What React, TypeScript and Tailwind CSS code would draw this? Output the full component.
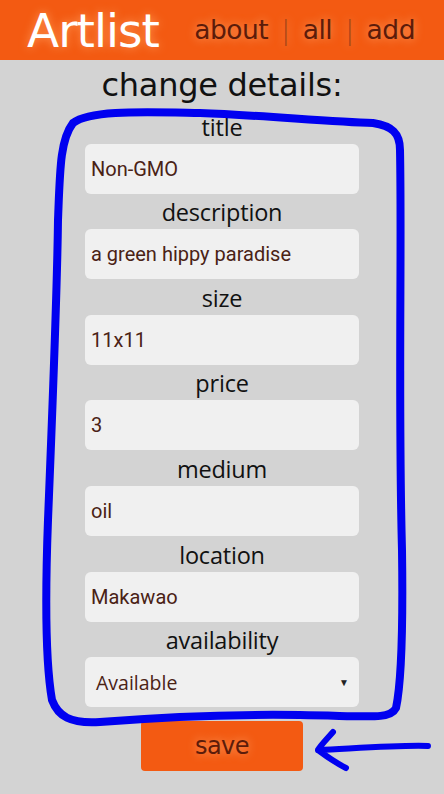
import React from "react";

const fields: { label: string; value: string }[] = [
  { label: "title", value: "Non-GMO" },
  { label: "description", value: "a green hippy paradise" },
  { label: "size", value: "11x11" },
  { label: "price", value: "3" },
  { label: "medium", value: "oil" },
  { label: "location", value: "Makawao" },
];

export default function App() {
  return (
    <div className="relative w-[444px] h-[794px] bg-[#d3d3d3] overflow-hidden">
      <header className="h-[60px] bg-[#f35a12] flex items-center px-[27px]">
        <div className="text-white text-[47px] leading-none [font-family:'DejaVu_Sans',sans-serif] tracking-[-1px] [text-shadow:0_0_10px_#ff9a5a]">
          Artlist
        </div>
        <nav className="ml-auto flex items-center gap-[13px] text-[26.5px] text-[#5c1c0a] [font-family:'DejaVu_Sans',sans-serif] tracking-[-0.5px] [text-shadow:0_0_10px_#ffa36a] pr-[2px]">
          <span>about</span>
          <span className="text-[#a34418] font-light">|</span>
          <span>all</span>
          <span className="text-[#a34418] font-light">|</span>
          <span>add</span>
        </nav>
      </header>
      <main className="flex flex-col items-center">
        <h1 className="h-[48px] flex items-center text-[32px] text-[#111] [font-family:'DejaVu_Sans',sans-serif] tracking-[-0.3px] pt-[2px]">
          change details:
        </h1>
        <div className="w-[274px] flex flex-col">
          {fields.map((f) => (
            <div key={f.label} className="flex flex-col">
              <label className="h-[35.6px] pt-[3px] flex items-center justify-center text-[23.5px] text-[#111] [font-family:'Open_Sans',sans-serif] tracking-[-0.2px]">
                {f.label}
              </label>
              <input
                readOnly
                defaultValue={f.value}
                className="h-[50px] rounded-[6px] bg-[#f0f0f0] px-[6px] text-[20px] text-[#4a2215] [font-family:Roboto,sans-serif] outline-none"
              />
            </div>
          ))}
          <div className="flex flex-col">
            <label className="h-[35.6px] pt-[3px] flex items-center justify-center text-[23.5px] text-[#111] [font-family:'Open_Sans',sans-serif] tracking-[-0.2px]">
              availability
            </label>
            <div className="h-[50px] rounded-[6px] bg-[#f0f0f0] pl-[11px] pr-[10px] flex items-center justify-between text-[19.5px] text-[#4a2215] [font-family:'Open_Sans',sans-serif]">
              <span>Available</span>
              <span className="text-[10px] text-[#222]">▼</span>
            </div>
          </div>
        </div>
        <button className="mt-[14px] w-[162px] h-[50px] rounded-[4px] bg-[#f35a12] text-[24px] text-[#5c1c0a] [font-family:'DejaVu_Sans',sans-serif] tracking-[-0.5px] [text-shadow:0_0_10px_#ffa36a]">
          save
        </button>
      </main>
      <svg
        className="absolute inset-0 pointer-events-none"
        width="444"
        height="794"
        viewBox="0 0 444 794"
      >
        <path
          d="M73 123 C 90 110, 140 112, 200 113 C 260 115, 330 122, 373 123 C 392 126, 400 133, 400 150 C 402 250, 398 400, 402 550 C 403 620, 402 680, 396 708 C 390 720, 370 716, 300 715 C 230 714, 150 718, 100 722 C 70 724, 58 716, 52 700 C 45 660, 45 600, 48 520 C 52 420, 57 300, 58 220 C 60 170, 60 140, 73 123 Z"
          fill="none"
          stroke="#0000f0"
          strokeWidth="8"
          strokeLinejoin="round"
          strokeLinecap="round"
        />
        <path
          d="M428 746 C 400 745, 360 748, 318 750 M333 732 C 326 740, 320 746, 318 750 C 326 756, 336 763, 346 768"
          fill="none"
          stroke="#0000f0"
          strokeWidth="6"
          strokeLinejoin="round"
          strokeLinecap="round"
        />
      </svg>
    </div>
  );
}
